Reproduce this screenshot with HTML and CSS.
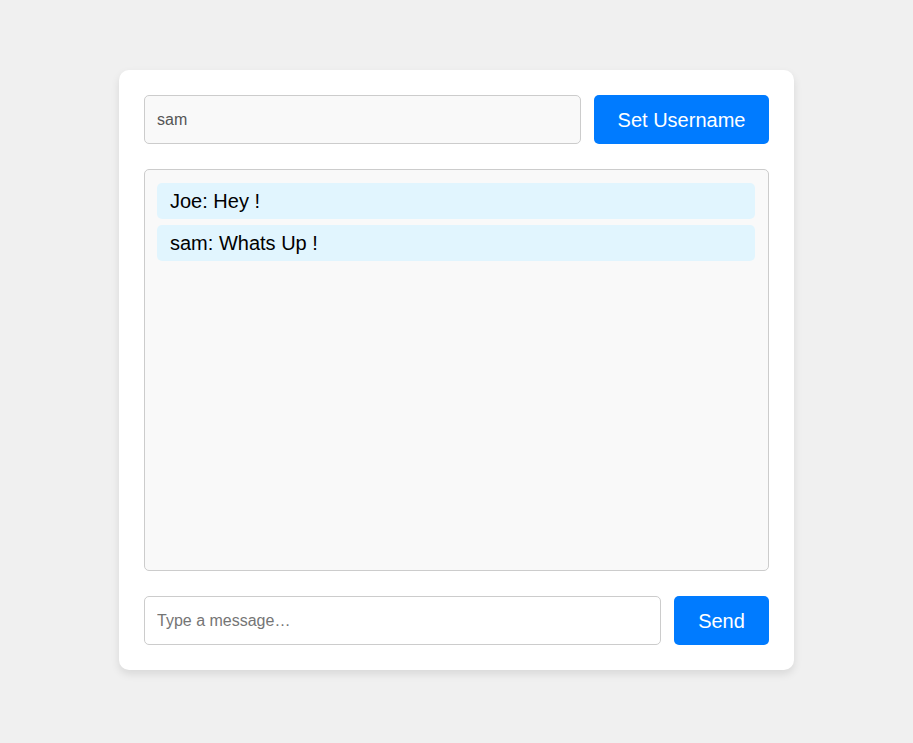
FILE: index.html
```html
<!DOCTYPE html>
<html>
<head>
<meta charset="utf-8">
<link rel="stylesheet" href="styles.css">
</head>
<body>
<div class="card">
  <div class="row">
    <input class="field field-user" type="text" value="sam">
    <button class="btn btn-user">Set Username</button>
  </div>
  <div class="chat">
    <div class="msg">Joe: Hey !</div>
    <div class="msg">sam: Whats Up !</div>
  </div>
  <div class="row">
    <input class="field field-msg" type="text" placeholder="Type a message…">
    <button class="btn btn-send">Send</button>
  </div>
</div>
</body>
</html>
```
FILE: styles.css
```css
html, body {
  margin: 0;
  padding: 0;
}
body {
  background: #f0f0f0;
  font-family: "Liberation Sans", Arial, sans-serif;
  display: flex;
  justify-content: center;
  padding-top: 70px;
  height: 743px;
  box-sizing: border-box;
}
.card {
  width: 675px;
  height: 600px;
  box-sizing: border-box;
  background: #fff;
  border-radius: 10px;
  padding: 25px;
  box-shadow: 0 4px 8px rgba(0,0,0,0.1);
  display: flex;
  flex-direction: column;
  gap: 25px;
}
.row {
  display: flex;
  gap: 13px;
  height: 49px;
}
.field {
  flex: 1;
  min-width: 0;
  box-sizing: border-box;
  height: 49px;
  border: 1px solid #ccc;
  border-radius: 5px;
  padding: 0 12px;
  font-family: "Liberation Sans", Arial, sans-serif;
  font-size: 16px;
  color: #555;
  outline: none;
}
.field-user {
  background: #f9f9f9;
}
.field-msg {
  background: #fff;
}
.field::placeholder {
  color: #757575;
}
.btn {
  box-sizing: border-box;
  height: 49px;
  border: none;
  border-radius: 5px;
  background: #007bff;
  color: #fff;
  font-family: "Liberation Sans", Arial, sans-serif;
  font-size: 20px;
  padding: 2px 0 0;
  cursor: pointer;
}
.btn-user {
  width: 175px;
}
.btn-send {
  width: 95px;
}
.chat {
  height: 402px;
  box-sizing: border-box;
  border: 1px solid #ccc;
  border-radius: 5px;
  background: #f9f9f9;
  padding: 13px 13px 13px 12px;
  display: flex;
  flex-direction: column;
  gap: 6px;
}
.msg {
  background: #e1f5fe;
  border-radius: 5px;
  padding: 6px 13px;
  font-size: 20px;
  line-height: 24px;
  color: #000;
}
```
